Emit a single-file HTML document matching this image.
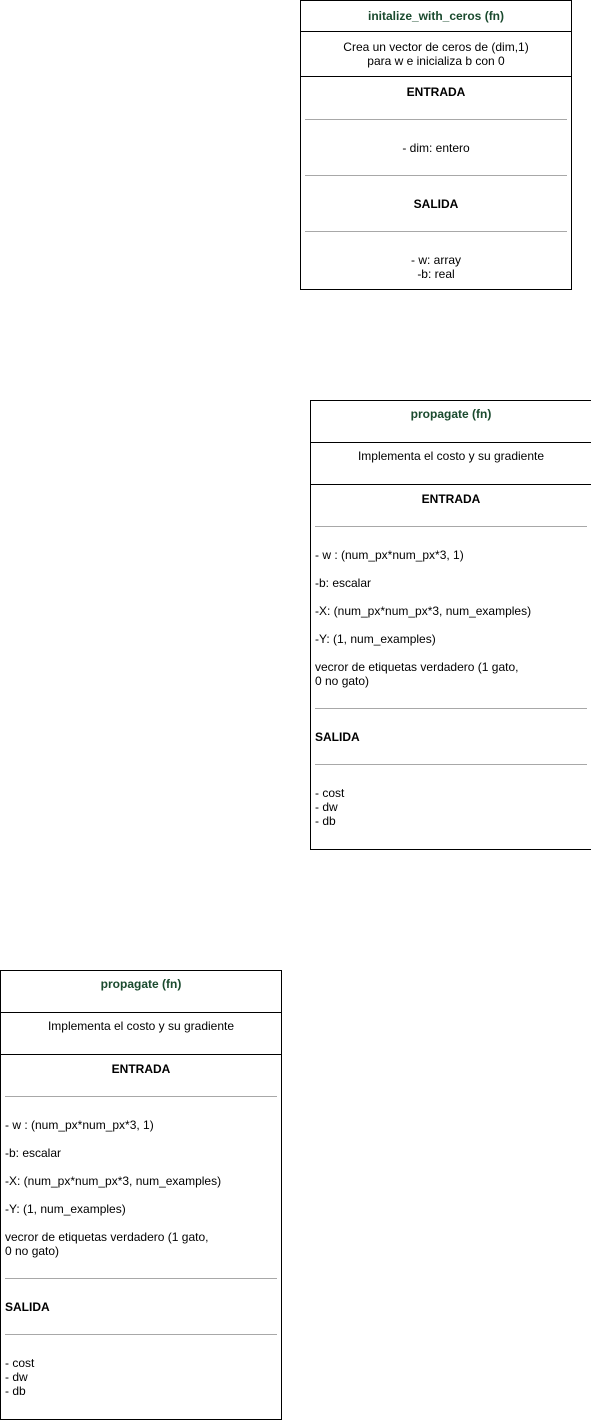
<!DOCTYPE html>
<html><head><style>
body{margin:0;width:591px;height:1421px;background:#fff;position:relative;overflow:hidden;font-family:"Liberation Sans",sans-serif;font-size:12px;color:#000}
.b{position:absolute;border:1px solid #000;box-sizing:border-box}
.h{position:absolute;height:1px;background:#000}
.g{position:absolute;height:1px;background:#a8a8a8}
.t{position:absolute;line-height:14px;white-space:nowrap}
.c{text-align:center}
.ti{font-weight:bold;color:#1a4a2e}
.bo{font-weight:bold}
</style></head><body>
<!-- box 1 -->
<div class="b" style="left:300px;top:0;width:272px;height:290px"></div>
<div class="t c ti" style="left:300px;width:272px;top:9px">initalize_with_ceros (fn)</div>
<div class="h" style="left:300px;width:272px;top:31px"></div>
<div class="t c" style="left:300px;width:272px;top:40px">Crea un vector de ceros de (dim,1)<br>para w e inicializa b con 0</div>
<div class="h" style="left:300px;width:272px;top:76px"></div>
<div class="t c bo" style="left:300px;width:272px;top:85px">ENTRADA</div>
<div class="g" style="left:305px;width:262px;top:119px"></div>
<div class="t c" style="left:300px;width:272px;top:141px">- dim: entero</div>
<div class="g" style="left:305px;width:262px;top:175px"></div>
<div class="t c bo" style="left:300px;width:272px;top:197px">SALIDA</div>
<div class="g" style="left:305px;width:262px;top:231px"></div>
<div class="t c" style="left:300px;width:272px;top:253px">- w: array<br>-b: real</div>

<!-- box 2 -->
<div class="b" style="left:310px;top:400px;width:282px;height:450px"></div>
<div class="t c ti" style="left:310px;width:282px;top:407px">propagate (fn)</div>
<div class="h" style="left:310px;width:282px;top:442px"></div>
<div class="t c" style="left:310px;width:282px;top:449px">Implementa el costo y su gradiente</div>
<div class="h" style="left:310px;width:282px;top:484px"></div>
<div class="t c bo" style="left:310px;width:282px;top:492px">ENTRADA</div>
<div class="g" style="left:315px;width:272px;top:526px"></div>
<div class="t" style="left:315px;top:548px">- w : (num_px*num_px*3, 1)</div>
<div class="t" style="left:315px;top:576px">-b: escalar</div>
<div class="t" style="left:315px;top:604px">-X: (num_px*num_px*3, num_examples)</div>
<div class="t" style="left:315px;top:632px">-Y: (1, num_examples)</div>
<div class="t" style="left:315px;top:660px">vecror de etiquetas verdadero (1 gato,<br>0 no gato)</div>
<div class="g" style="left:315px;width:272px;top:708px"></div>
<div class="t bo" style="left:315px;top:730px">SALIDA</div>
<div class="g" style="left:315px;width:272px;top:764px"></div>
<div class="t" style="left:315px;top:786px">- cost<br>- dw<br>- db</div>

<!-- box 3 -->
<div class="b" style="left:0;top:970px;width:282px;height:450px"></div>
<div class="t c ti" style="left:0;width:282px;top:977px">propagate (fn)</div>
<div class="h" style="left:0;width:282px;top:1012px"></div>
<div class="t c" style="left:0;width:282px;top:1019px">Implementa el costo y su gradiente</div>
<div class="h" style="left:0;width:282px;top:1054px"></div>
<div class="t c bo" style="left:0;width:282px;top:1062px">ENTRADA</div>
<div class="g" style="left:5px;width:272px;top:1096px"></div>
<div class="t" style="left:5px;top:1118px">- w : (num_px*num_px*3, 1)</div>
<div class="t" style="left:5px;top:1146px">-b: escalar</div>
<div class="t" style="left:5px;top:1174px">-X: (num_px*num_px*3, num_examples)</div>
<div class="t" style="left:5px;top:1202px">-Y: (1, num_examples)</div>
<div class="t" style="left:5px;top:1230px">vecror de etiquetas verdadero (1 gato,<br>0 no gato)</div>
<div class="g" style="left:5px;width:272px;top:1278px"></div>
<div class="t bo" style="left:5px;top:1300px">SALIDA</div>
<div class="g" style="left:5px;width:272px;top:1334px"></div>
<div class="t" style="left:5px;top:1356px">- cost<br>- dw<br>- db</div>
</body></html>
